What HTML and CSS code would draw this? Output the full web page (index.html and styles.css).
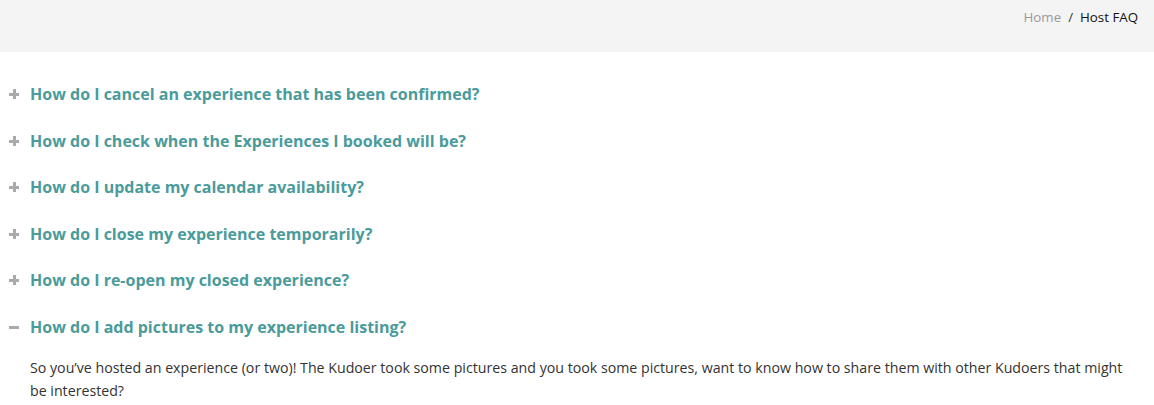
FILE: index.html
```html
<!DOCTYPE html>
<html>
<head>
<meta charset="utf-8">
<link rel="stylesheet" href="styles.css">
</head>
<body>
<header class="topbar">
  <nav class="crumbs"><a class="crumb-link" href="#">Home</a><span class="sep">/</span><span class="crumb-current">Host FAQ</span></nav>
</header>
<main class="faq">
  <div class="item"><div class="q"><span class="icon plus"></span><span class="q-text">How do I cancel an experience that has been confirmed?</span></div></div>
  <div class="item"><div class="q"><span class="icon plus"></span><span class="q-text">How do I check when the Experiences I booked will be?</span></div></div>
  <div class="item"><div class="q"><span class="icon plus"></span><span class="q-text">How do I update my calendar availability?</span></div></div>
  <div class="item"><div class="q"><span class="icon plus"></span><span class="q-text">How do I close my experience temporarily?</span></div></div>
  <div class="item"><div class="q"><span class="icon plus"></span><span class="q-text">How do I re-open my closed experience?</span></div></div>
  <div class="item open"><div class="q"><span class="icon minus"></span><span class="q-text">How do I add pictures to my experience listing?</span></div>
    <p class="answer">So you’ve hosted an experience (or two)! The Kudoer took some pictures and you took some pictures, want to know how to share them with other Kudoers that might be interested?</p>
  </div>
</main>
</body>
</html>
```
FILE: styles.css
```css
* { box-sizing: border-box; }
body { margin: 0; background: #fff; font-family: "Open Sans", "Noto Sans", sans-serif; }
.topbar { background: #f4f4f4; height: 52px; display: flex; justify-content: flex-end; align-items: flex-start; padding: 7px 16px 0 0; }
.crumbs { font-size: 13.3px; line-height: 20px; display: flex; align-items: center; }
.crumb-link { color: #999; text-decoration: none; }
.sep { color: #333; margin: 0 7px; }
.crumb-current { color: #111; }
.faq { padding: 31px 0 0 0; }
.item { margin-bottom: 24.6px; }
.item:last-child { margin-bottom: 0; }
.q { display: flex; align-items: center; height: 22px; }
.icon { width: 10px; height: 10px; margin: 0 11px 0 9px; position: relative; flex: none; }
.icon::before, .icon::after { content: ""; position: absolute; background: #aaa; }
.icon::before { left: 0; right: 0; top: 4px; height: 3px; }
.plus::after { top: 0; bottom: 0; left: 4px; width: 3px; }
.minus::after { display: none; }
.q-text { color: #4a9b9b; font-weight: 700; font-size: 16px; }
.answer { margin: 18px 20px 0 30px; font-size: 14.2px; line-height: 23px; color: #333; }
```
